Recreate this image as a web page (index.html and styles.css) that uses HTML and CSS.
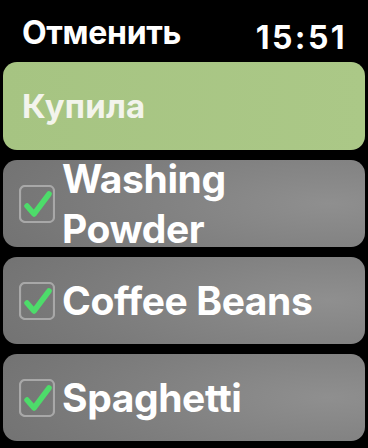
FILE: index.html
```html
<!DOCTYPE html>
<html>
<head>
<meta charset="utf-8">
<link rel="stylesheet" href="styles.css">
</head>
<body>
<div class="screen">
  <div class="header">
    <span class="cancel">Отменить</span>
    <span class="time">15:51</span>
  </div>
  <div class="list">
    <div class="card green"><span class="gtext">Купила</span></div>
    <div class="card item">
      <span class="check"><svg viewBox="0 0 36 38" width="36" height="38"><rect x="1" y="1" width="34" height="36" rx="5" fill="none" stroke="#a8a8a8" stroke-width="2.2"/><path d="M8 21 L15 29 L30 9" fill="none" stroke="#4ddc6a" stroke-width="5.5" stroke-linecap="round" stroke-linejoin="round"/></svg></span>
      <span class="label">Washing<br>Powder</span>
    </div>
    <div class="card item">
      <span class="check"><svg viewBox="0 0 36 38" width="36" height="38"><rect x="1" y="1" width="34" height="36" rx="5" fill="none" stroke="#a8a8a8" stroke-width="2.2"/><path d="M8 21 L15 29 L30 9" fill="none" stroke="#4ddc6a" stroke-width="5.5" stroke-linecap="round" stroke-linejoin="round"/></svg></span>
      <span class="label">Coffee Beans</span>
    </div>
    <div class="card item">
      <span class="check"><svg viewBox="0 0 36 38" width="36" height="38"><rect x="1" y="1" width="34" height="36" rx="5" fill="none" stroke="#a8a8a8" stroke-width="2.2"/><path d="M8 21 L15 29 L30 9" fill="none" stroke="#4ddc6a" stroke-width="5.5" stroke-linecap="round" stroke-linejoin="round"/></svg></span>
      <span class="label">Spaghetti</span>
    </div>
  </div>
</div>
</body>
</html>
```
FILE: styles.css
```css
html, body {
  margin: 0;
  padding: 0;
  background: #000;
}
.screen {
  width: 368px;
  height: 448px;
  overflow: hidden;
  font-family: Inter, "Liberation Sans", sans-serif;
  color: #fff;
}
.header {
  height: 62px;
  display: flex;
  justify-content: space-between;
  align-items: flex-start;
  padding: 0 22px 0 22px;
  box-sizing: border-box;
}
.cancel {
  font-size: 32px;
  line-height: 32px;
  font-weight: 700;
  letter-spacing: -0.3px;
  margin-top: 17px;
}
.time {
  font-size: 32px;
  line-height: 32px;
  font-weight: 700;
  letter-spacing: 2.4px;
  margin-top: 22px;
  margin-right: -1px;
}
.list {
  display: flex;
  flex-direction: column;
  gap: 10px;
  padding: 0 3px;
}
.card {
  height: 88px;
  border-radius: 14px;
  display: flex;
  align-items: center;
  box-sizing: border-box;
}
.green {
  background: linear-gradient(90deg, #a6c482, #abc887);
  padding-left: 19px;
}
.gtext {
  font-size: 33px;
  font-weight: 700;
  color: #f3f4ec;
  letter-spacing: 0.2px;
}
.item {
  height: 87px;
  background: radial-gradient(ellipse 120% 140% at 90% 50%, #8f8f8f, #7a7a7a 60%, #6d6d6d);
  padding-left: 16px;
  gap: 7px;
}
.check {
  display: flex;
  width: 36px;
  height: 38px;
}
.label {
  font-size: 39px;
  font-weight: 700;
  line-height: 50px;
  letter-spacing: -0.4px;
}
```
